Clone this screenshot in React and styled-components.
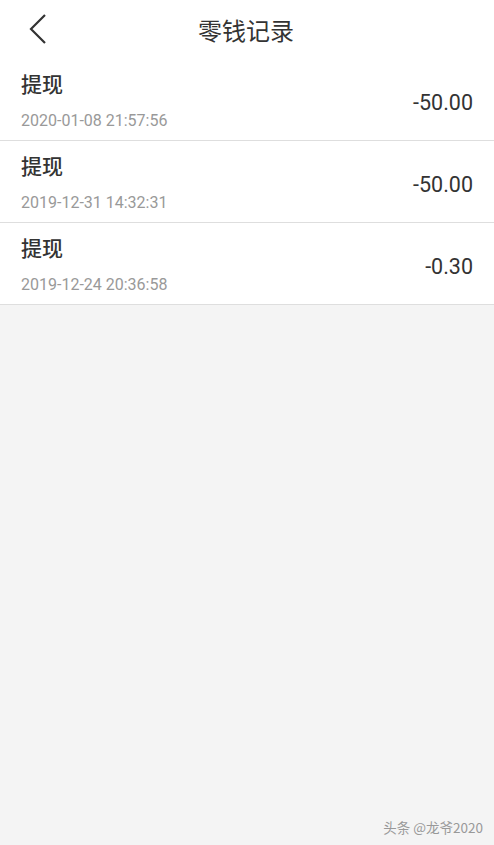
import styled, { createGlobalStyle } from "styled-components";

const GlobalStyle = createGlobalStyle`
  html, body {
    margin: 0;
    padding: 0;
    background-color: #f4f4f4;
    font-family: Roboto, "Noto Sans CJK SC", sans-serif;
  }
`;

const Page = styled.div`
  min-height: 845px;
  background-color: #f4f4f4;
  display: flex;
  flex-direction: column;
  position: relative;
`;

const Header = styled.div`
  height: 59px;
  background-color: #fff;
  display: grid;
  grid-template-columns: 60px 1fr 60px;
  align-items: center;

  h1 {
    margin: 0;
    grid-column: 2 / 3;
    text-align: center;
    font-size: 24px;
    font-weight: 400;
    color: #333;
    font-family: "Noto Sans CJK SC", sans-serif;
    padding-right: 2px;
  }
`;

const BackButton = styled.button`
  grid-column: 1 / 2;
  grid-row: 1;
  border: none;
  background: transparent;
  padding: 0 0 2px 28px;
  height: 100%;
  display: flex;
  align-items: center;
  cursor: pointer;
`;

const List = styled.ul`
  margin: 0;
  padding: 0;
  list-style: none;
  background-color: #fff;
`;

const Row = styled.li`
  height: 81px;
  display: flex;
  align-items: center;
  justify-content: space-between;
  padding: 0 21px;
  border-bottom: 1px solid #dedede;
`;

const Info = styled.div`
  display: flex;
  flex-direction: column;
  gap: 14px;
  padding-top: 1px;

  .title {
    font-family: "Noto Sans CJK SC", sans-serif;
    font-size: 21px;
    font-weight: 500;
    color: #333;
    line-height: 28px;
  }

  .time {
    font-size: 16px;
    color: #999;
    line-height: 20px;
  }
`;

const Amount = styled.span`
  font-size: 21.5px;
  color: #333;
  padding-top: 6px;
`;

const Watermark = styled.span`
  position: absolute;
  right: 11px;
  bottom: 8px;
  font-size: 13.5px;
  color: #999;
  font-family: "Noto Sans CJK SC", sans-serif;
`;

const records = [
  { id: 1, title: "提现", time: "2020-01-08 21:57:56", amount: "-50.00" },
  { id: 2, title: "提现", time: "2019-12-31 14:32:31", amount: "-50.00" },
  { id: 3, title: "提现", time: "2019-12-24 20:36:58", amount: "-0.30" },
];

export default function App() {
  return (
    <Page>
      <GlobalStyle />
      <Header>
        <BackButton>
          <svg width="20" height="32" viewBox="0 0 20 32">
            <path d="M17 2 L3 16 L17 30" fill="none" stroke="#333" strokeWidth="2.2" />
          </svg>
        </BackButton>
        <h1>零钱记录</h1>
      </Header>
      <List>
        {records.map(({ id, title, time, amount }) => (
          <Row key={id}>
            <Info>
              <span className="title">{title}</span>
              <span className="time">{time}</span>
            </Info>
            <Amount>{amount}</Amount>
          </Row>
        ))}
      </List>
      <Watermark>头条 @龙爷2020</Watermark>
    </Page>
  );
}
